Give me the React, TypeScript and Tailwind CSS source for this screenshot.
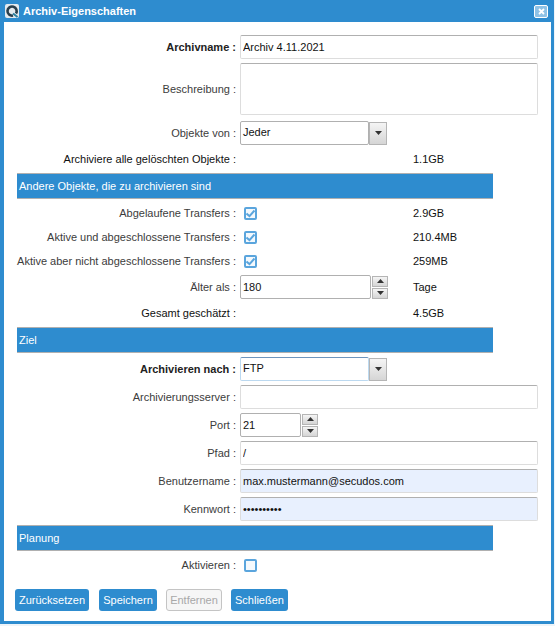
import type { ReactNode } from 'react'

const inputCls =
  'h-6 w-full rounded-[2px] border border-[#dddddd] border-t-[#b0b0b0] px-[2px] text-[11px] text-[#111] outline-none'

function Label({ children, bold, dark }: { children: ReactNode; bold?: boolean; dark?: boolean }) {
  return (
    <div
      className={`w-[232px] shrink-0 whitespace-nowrap text-right text-[11px] ${bold ? 'font-bold text-[#222]' : dark ? 'text-[#111]' : 'text-[#3c3c3c]'}`}
    >
      {children} :
    </div>
  )
}

function Row({ label, bold, dark, children }: { label: string; bold?: boolean; dark?: boolean; children?: ReactNode }) {
  return (
    <div className="flex h-6 items-center">
      <Label bold={bold} dark={dark}>{label}</Label>
      <div className="ml-1 flex h-6 flex-1 items-center pr-[13px]">{children}</div>
    </div>
  )
}

function Section({ title }: { title: string }) {
  return (
    <div className="ml-[13px] flex h-[26px] w-[476px] items-center border-y border-[#b0b0b0] bg-[#2e8ccf] pl-[2px] text-[11px] text-white">
      {title}
    </div>
  )
}

function Check({ on }: { on?: boolean }) {
  return (
    <div className="ml-[8px] flex h-[13px] w-[13px] items-center justify-center rounded-[2px] border-2 border-[#5aa5dd] bg-[#f4f9fd]">
      {on && (
        <svg width="9" height="9" viewBox="0 0 9 9">
          <path d="M0.5 4.5 L3.5 7.2 L8.5 1.5" fill="none" stroke="#5aa5dd" strokeWidth="2" />
        </svg>
      )}
    </div>
  )
}

function Arrow({ up }: { up?: boolean }) {
  return (
    <svg width="7" height="4" viewBox="0 0 7 4">
      <path d={up ? 'M3.5 0 L7 4 L0 4 Z' : 'M0 0 L7 0 L3.5 4 Z'} fill="#333" />
    </svg>
  )
}

function Spinner() {
  return (
    <div className="ml-[1px] flex w-4 shrink-0 flex-col gap-[1px]">
      <div className="flex h-[11px] items-center justify-center border border-[#b5b5b5] bg-gradient-to-b from-[#f5f5f5] to-[#d5d5d5]">
        <Arrow up />
      </div>
      <div className="flex h-[11px] items-center justify-center border border-[#b5b5b5] bg-gradient-to-b from-[#f5f5f5] to-[#d5d5d5]">
        <Arrow />
      </div>
    </div>
  )
}

function SelectBox({ value, focus }: { value: string; focus?: boolean }) {
  return (
    <>
      <div
        className={`flex h-6 w-[129px] items-center rounded-[2px] border px-[2px] pb-[2px] text-[11px] text-[#111] ${focus ? 'border-[#bcd9f0] border-t-[#6f95bd]' : 'border-[#b0b0b0]'}`}
      >
        {value}
      </div>
      <div className="flex h-[23px] w-[18px] shrink-0 items-center justify-center border border-[#b5b5b5] bg-gradient-to-b from-[#f5f5f5] to-[#d5d5d5]">
        <Arrow />
      </div>
    </>
  )
}

function Btn({ children, disabled, w }: { children: ReactNode; disabled?: boolean; w: string }) {
  return (
    <button
      className={`flex h-[22px] items-center justify-center rounded-[3px] text-[11px] ${w} ${disabled ? 'border border-[#c4c4c4] bg-[#f6f6f6] text-[#a8a8a8]' : 'bg-[#2e8ccf] text-white'}`}
    >
      {children}
    </button>
  )
}

export default function App() {
  return (
    <div className="h-[626px] w-[555px] overflow-hidden bg-[#eef4f9] font-['Liberation_Sans',Arial,sans-serif]">
      <div className="flex h-[624px] w-[554px] flex-col border-b-[3px] border-l-[4px] border-r-[3px] border-[#2e8ccf] bg-white">
        {/* Title bar */}
        <div className="-ml-[4px] -mr-[3px] flex h-[22px] shrink-0 items-center bg-[#2e8ccf] pl-[5px] pr-[6px]">
          <div className="flex h-[14px] w-[14px] items-center justify-center rounded-[2px] bg-[#e4eaee]">
            <svg width="14" height="14" viewBox="0 0 14 14">
              <path d="M11 9.5 A4.6 4.6 0 1 0 8 11.6" fill="none" stroke="#2a3f4c" strokeWidth="2.6" />
              <path d="M8 9.5 L12.5 13" stroke="#2a7f9f" strokeWidth="2" />
            </svg>
          </div>
          <span className="ml-[4px] text-[11px] font-bold text-white">Archiv-Eigenschaften</span>
          <div className="ml-auto flex h-[13px] w-[14px] items-center justify-center rounded-[2px] border border-white bg-[#8fc2e6]">
            <svg width="7" height="7" viewBox="0 0 7 7">
              <path d="M1 1 L6 6 M6 1 L1 6" stroke="#fff" strokeWidth="1.8" />
            </svg>
          </div>
        </div>

        <div className="flex flex-1 flex-col pt-[13px]">
          <Row label="Archivname" bold>
            <input className={inputCls} defaultValue="Archiv 4.11.2021" />
          </Row>
          <div className="mt-1 flex h-[52px] items-center">
            <Label>Beschreibung</Label>
            <div className="ml-1 flex-1 pr-[13px]">
              <div className="h-[52px] w-full rounded-[2px] border border-[#dddddd] border-t-[#b0b0b0]" />
            </div>
          </div>
          <div className="mt-[6px]">
            <Row label="Objekte von">
              <SelectBox value="Jeder" />
            </Row>
          </div>
          <div className="mt-[2px] flex h-6 items-center">
            <Label dark>Archiviere alle gelöschten Objekte</Label>
            <div className="ml-[177px] text-[11px] text-[#111]">1.1GB</div>
          </div>

          <div className="mt-[2px]">
            <Section title="Andere Objekte, die zu archivieren sind" />
          </div>
          <div className="mt-[2px] flex h-6 items-center">
            <Label>Abgelaufene Transfers</Label>
            <Check on />
            <div className="ml-[156px] text-[11px] text-[#111]">2.9GB</div>
          </div>
          <div className="flex h-6 items-center">
            <Label>Aktive und abgeschlossene Transfers</Label>
            <Check on />
            <div className="ml-[156px] text-[11px] text-[#111]">210.4MB</div>
          </div>
          <div className="flex h-6 items-center">
            <Label>Aktive aber nicht abgeschlossene Transfers</Label>
            <Check on />
            <div className="ml-[156px] text-[11px] text-[#111]">259MB</div>
          </div>
          <div className="mt-[2px] flex h-6 items-center">
            <Label>Älter als</Label>
            <div className="ml-1 flex items-center">
              <div className="flex h-6 w-[131px] items-center rounded-[2px] border border-[#b0b0b0] px-[2px] text-[11px] text-[#111]">180</div>
              <Spinner />
              <div className="ml-[25px] text-[11px] text-[#111]">Tage</div>
            </div>
          </div>
          <div className="mt-[2px] flex h-6 items-center">
            <Label dark>Gesamt geschätzt</Label>
            <div className="ml-[177px] text-[11px] text-[#111]">4.5GB</div>
          </div>

          <div className="mt-[2px]">
            <Section title="Ziel" />
          </div>
          <div className="mt-1">
            <Row label="Archivieren nach" bold>
              <SelectBox value="FTP" focus />
            </Row>
          </div>
          <div className="mt-1">
            <Row label="Archivierungsserver">
              <input className={inputCls} />
            </Row>
          </div>
          <div className="mt-1 flex h-6 items-center">
            <Label>Port</Label>
            <div className="ml-1 flex items-center">
              <div className="flex h-6 w-[61px] items-center rounded-[2px] border border-[#b0b0b0] px-[2px] text-[11px] text-[#111]">21</div>
              <Spinner />
            </div>
          </div>
          <div className="mt-1">
            <Row label="Pfad">
              <input className={inputCls} defaultValue="/" />
            </Row>
          </div>
          <div className="mt-1">
            <Row label="Benutzername">
              <input className={`${inputCls} bg-[#e8f0fe]`} defaultValue="max.mustermann@secudos.com" />
            </Row>
          </div>
          <div className="mt-1">
            <Row label="Kennwort">
              <input className={`${inputCls} bg-[#e8f0fe]`} type="password" defaultValue="1234567890" />
            </Row>
          </div>

          <div className="mt-1">
            <Section title="Planung" />
          </div>
          <div className="mt-[2px] flex h-6 items-center">
            <Label>Aktivieren</Label>
            <Check />
          </div>

          <div className="ml-[11px] mt-3 flex">
            <Btn w="w-[74px]">Zurücksetzen</Btn>
            <div className="ml-[10px]"><Btn w="w-[58px]">Speichern</Btn></div>
            <div className="ml-[9px]"><Btn disabled w="w-[56px]">Entfernen</Btn></div>
            <div className="ml-[9px]"><Btn w="w-[57px]">Schließen</Btn></div>
          </div>
        </div>
      </div>
    </div>
  )
}
